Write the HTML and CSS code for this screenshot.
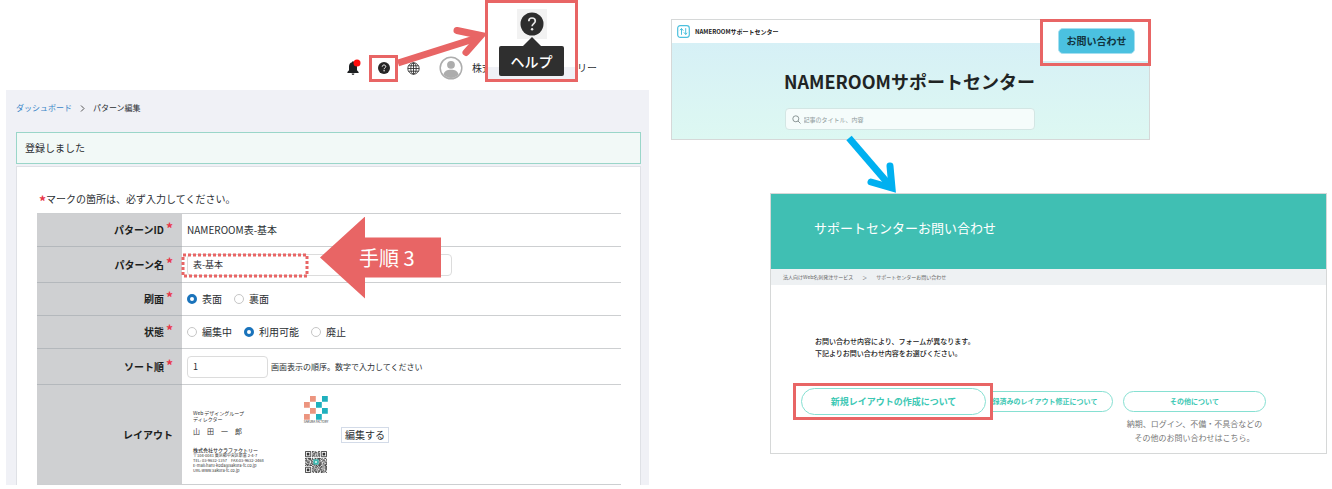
FILE: index.html
```html
<!DOCTYPE html>
<html lang="ja">
  <head>
    <meta charset="UTF-8" />
    <meta name="viewport" content="width=device-width, initial-scale=1.0" />
    <title>NAMEROOM パターン編集</title>
    <link rel="stylesheet" href="styles.css">
  </head>
  <body>
    <main class="guide">
      <section class="admin">
        <header class="admin-header">
          <button class="icon-button bell" type="button" aria-label="お知らせ">
            <svg width="15" height="18" viewBox="0 0 15 18">
              <path d="M6 3.2a1 1 0 0 1 2 0c2 .5 3 2.2 3 4.3v3.8l1.6 1.7v.9H1.4V13L3 11.3V7.500c0-2.100 1-3.800 3-4.300z" fill="#1d1f21" />
              <path d="M5.600 14.600h2.800a1.400 1.400 0 0 1-2.800 0z" fill="#1d1f21" />
              <circle cx="11" cy="4" r="3.500" fill="#ff0c0c" />
            </svg>
          </button>
          <button class="icon-button help" type="button" aria-label="ヘルプ">
            <svg width="12" height="12" viewBox="0 0 24 24">
              <circle cx="12" cy="12" r="12" fill="#262626" />
              <path d="M8.500 9.300c0-2 1.500-3.300 3.500-3.300s3.500 1.300 3.500 3.100c0 2.600-3.300 2.700-3.300 5.400" fill="none" stroke="#fff" stroke-width="2" />
              <circle cx="12.200" cy="17.500" r="1.400" fill="#fff" />
            </svg>
          </button>
          <button class="icon-button globe" type="button" aria-label="言語">
            <svg width="13" height="13" viewBox="0 0 13 13" fill="none" stroke="#333" stroke-width="0.900">
              <circle cx="6.500" cy="6.500" r="5.700" />
              <ellipse cx="6.500" cy="6.500" rx="2.700" ry="5.700" />
              <path d="M6.500 .8v11.400M.8 6.500h11.400M1.500 3.800h10M1.500 9.200h10" />
            </svg>
          </button>
          <svg class="avatar" width="24" height="24" viewBox="0 0 24 24">
            <circle cx="12" cy="12" r="10.800" fill="#fff" stroke="#adadad" stroke-width="1.500" />
            <circle cx="12" cy="8.800" r="3.900" fill="#adadad" />
            <path d="M4.500 18.500c.8-3.400 3.500-4.700 7.500-4.700s6.700 1.300 7.500 4.700a10 10 0 0 1-15 0z" fill="#adadad" />
          </svg>
          <div class="company"><span>株式</span><span>リー</span></div>

          <div class="help-zoom">
            <span class="help-zoom-icon">
              <svg width="24" height="24" viewBox="0 0 24 24">
                <circle cx="12" cy="12" r="11.500" fill="#2d2d2d" />
                <path d="M8.800 9.300c0-2 1.300-3.300 3.200-3.300s3.300 1.200 3.300 3c0 2.500-3.200 2.700-3.200 5.300" fill="none" stroke="#e8e8e8" stroke-width="1.700" />
                <circle cx="12.100" cy="17.300" r="1.200" fill="#e8e8e8" />
              </svg>
            </span>
            <span class="tooltip">ヘルプ</span>
          </div>
          <svg class="help-arrow" width="100" height="50" viewBox="0 0 100 50" fill="none" stroke="#e86565" stroke-width="7">
            <path d="M7 43L86 18" />
            <path d="M66 10.500L90 15.500L75 32.500" stroke-linecap="round" />
          </svg>
        </header>

        <div class="admin-body">
          <nav class="crumbs">
            <a href="#">ダッシュボード</a>
            <svg width="5" height="7" viewBox="0 0 5 7" fill="none" stroke="#555"><path d="M1 .5l3 3-3 3" /></svg>
            <span>パターン編集</span>
          </nav>
          <p class="notice">登録しました</p>

          <form class="panel">
            <p class="required-note"><span class="req">*</span>マークの箇所は、必ず入力してください。</p>
            <table class="pattern">
              <tr class="row-id">
                <th scope="row">パターンID<span class="req">*</span></th>
                <td>NAMEROOM表-基本</td>
              </tr>
              <tr class="row-name">
                <th scope="row"><label for="pattern-name">パターン名</label><span class="req">*</span></th>
                <td>
                  <div class="name-field">
                    <input class="text-input" id="pattern-name" type="text" value="表-基本" />
                    <svg class="dotted" width="128" height="25"><rect x="2" y="2" width="124" height="21" fill="none" stroke="#e86565" stroke-width="3" stroke-dasharray="3 2" /></svg>
                    <div class="step">手順 3</div>
                  </div>
                </td>
              </tr>
              <tr>
                <th scope="row">刷面<span class="req">*</span></th>
                <td>
                  <div class="radios">
                    <label><input type="radio" name="side" checked />表面</label>
                    <label><input type="radio" name="side" />裏面</label>
                  </div>
                </td>
              </tr>
              <tr>
                <th scope="row">状態<span class="req">*</span></th>
                <td>
                  <div class="radios">
                    <label><input type="radio" name="state" />編集中</label>
                    <label><input type="radio" name="state" checked />利用可能</label>
                    <label><input type="radio" name="state" />廃止</label>
                  </div>
                </td>
              </tr>
              <tr class="row-sort">
                <th scope="row"><label for="sort-order">ソート順</label><span class="req">*</span></th>
                <td>
                  <div class="sort-field">
                    <input class="text-input" id="sort-order" type="text" value="1" />
                    <span>画面表示の順序。数字で入力してください</span>
                  </div>
                </td>
              </tr>
              <tr class="row-layout">
                <th scope="row">レイアウト</th>
                <td>
                  <div class="layout-field">
                    <div class="meishi">
                      <div class="meishi-text">
                        <p class="meishi-role">Web デザイングループ<br />ディレクター</p>
                        <p class="meishi-name">山　田　一　郎</p>
                        <p class="meishi-company">株式会社サクラファクトリー</p>
                        <p class="meishi-address">〒104-0041 東京都中央区新富 2-4-7<br />TEL: 03-9632-1357　FAX:03-9632-2468<br />E-mail:haru-koda@sakura-fc.co.jp<br />URL:www.sakura-fc.co.jp</p>
                      </div>
                      <div class="meishi-marks">
                        <div class="meishi-logo">
                          <svg width="24" height="24" viewBox="0 0 24 24">
                            <path d="M6 0h5.800v5.800H6zM0 6h5.800v5.800H0zM6 12h5.800v5.800H6zM0 18h5.800v5.800H0z" fill="#ec957f" />
                            <path d="M18 0h5.800v5.800H18zM12 6h5.800v5.800H12zM18 12h5.800v5.800H18zM12 18h5.800v5.800H12z" fill="#1fb0bd" />
                          </svg>
                          <small>SAKURA FACTORY</small>
                        </div>
                        <svg width="22" height="22" viewBox="0 0 25 25">
                          <g fill="none" stroke="#333" stroke-width="1">
                            <path d="M.5 .5h6v6h-6zM18.500 .5h6v6h-6zM.5 18.500h6v6h-6z" />
                            <path d="M8 .5h9" stroke-dasharray="2 1 1 3" />
                            <path d="M8 1.500h9" stroke-dasharray="1 2 3 1" />
                            <path d="M9 2.500h8" stroke-dasharray="3 1 1 1" />
                            <path d="M8 3.500h9" stroke-dasharray="1 1 2 1" />
                            <path d="M9 4.500h8" stroke-dasharray="2 2 1 1" />
                            <path d="M8 5.500h9" stroke-dasharray="3 1 2 1" />
                            <path d="M8 6.500h9" stroke-dasharray="1 1" />
                            <path d="M0 8.500h25" stroke-dasharray="2 1 4 1 1 2" />
                            <path d="M1 9.500h24" stroke-dasharray="1 2 3 1 2 1" />
                            <path d="M0 10.500h25" stroke-dasharray="3 1 1 1 2 2" />
                            <path d="M1 11.500h24" stroke-dasharray="2 1 1 2" />
                            <path d="M0 12.500h25" stroke-dasharray="1 1 4 1 2 1" />
                            <path d="M2 13.500h23" stroke-dasharray="3 2 1 1" />
                            <path d="M0 14.500h25" stroke-dasharray="2 2 1 1 3 1" />
                            <path d="M1 15.500h24" stroke-dasharray="4 1 1 1" />
                            <path d="M0 16.500h25" stroke-dasharray="1 1 2 1 3 2" />
                            <path d="M8 17.500h17" stroke-dasharray="2 1 1 1" />
                            <path d="M9 18.500h16" stroke-dasharray="1 1 3 1" />
                            <path d="M8 19.500h17" stroke-dasharray="3 2 1 1" />
                            <path d="M8 20.500h17" stroke-dasharray="1 2 2 1" />
                            <path d="M9 21.500h16" stroke-dasharray="4 1 1 1" />
                            <path d="M8 22.500h17" stroke-dasharray="1 1 2 1" />
                            <path d="M8 23.500h17" stroke-dasharray="2 1 3 1" />
                            <path d="M9 24.500h16" stroke-dasharray="1 2 2 1" />
                          </g>
                          <path d="M2 2h3v3H2zM20 2h3v3h-3zM2 20h3v3H2z" fill="#333" />
                          <path d="M9.500 9.500h6v6h-6z" fill="#3db8b0" />
                          <path d="M11.500 11.500h2v2h-2z" fill="#c9efec" />
                        </svg>
                      </div>
                    </div>
                    <button class="edit" type="button">編集する</button>
                  </div>
                </td>
              </tr>
            </table>
          </form>
        </div>
      </section>

      <section class="support">
        <div class="center-card">
          <header class="center-bar">
            <svg width="13" height="13" viewBox="0 0 13 13" fill="none" stroke="#4cc0de">
              <rect x=".7" y=".7" width="11.600" height="11.600" rx="2.500" stroke-width="1.200" />
              <path d="M4.500 9.800V3.500L3 5.200M4.500 3.500l1.800 2.200M8.700 3.200v6.300l-1.900-2.200M8.700 9.500l1.500-1.700" stroke-width="1" />
            </svg>
            <span>NAMEROOMサポートセンター</span>
          </header>
          <div class="center-hero">
            <h1>NAMEROOMサポートセンター</h1>
            <label class="search">
              <svg width="9" height="9" viewBox="0 0 9 9" fill="none" stroke="#8b9696">
                <circle cx="3.800" cy="3.800" r="3" />
                <path d="M6 6l2.500 2.500" />
              </svg>
              <input type="search" aria-label="記事を検索" placeholder="記事のタイトル、内容" />
            </label>
          </div>
          <div class="inquiry-zoom">
            <button type="button">お問い合わせ</button>
          </div>
        </div>

        <div class="contact-card">
          <h2>サポートセンターお問い合わせ</h2>
          <nav class="contact-crumbs">
            <a href="#">法人向けWeb名刺発注サービス</a>
            <span>＞</span>
            <span>サポートセンターお問い合わせ</span>
          </nav>
          <div class="contact-body">
            <p class="lead">お問い合わせ内容により、フォームが異なります。<br />下記よりお問い合わせ内容をお選びください。</p>
            <div class="choices">
              <div class="choice">
                <div class="choice-zoom"><a class="pill pill-large" href="#">新規レイアウトの作成について</a></div>
              </div>
              <div class="choice">
                <a class="pill" href="#">登録済みのレイアウト修正について</a>
              </div>
              <div class="choice">
                <a class="pill" href="#">その他について</a>
                <p>納期、ログイン、不備・不具合などの<br />その他のお問い合わせはこちら。</p>
              </div>
            </div>
          </div>
          <svg class="contact-arrow" width="60" height="66" viewBox="0 0 60 66" fill="none" stroke="#00b0f0" stroke-width="7">
            <path d="M9 7L52 57" />
            <path d="M31 51L52 57L50 35" stroke-linecap="round" />
          </svg>
        </div>
      </section>
    </main>
  </body>
</html>
```
FILE: styles.css
```css
* {
  padding: 0;
  margin: 0;
  box-sizing: border-box;
}
body {
  background-color: #ffffff;
  font-family: "Noto Sans CJK JP", sans-serif;
  font-size: 10px;
  line-height: 12px;
  color: #2b2f33;
}
button,
input {
  font-family: inherit;
  color: inherit;
}
a {
  text-decoration: none;
}
svg {
  display: block;
  flex: none;
}
.guide {
  display: grid;
  grid-template-columns: 643fr 656fr;
  gap: 22px;
  align-items: start;
  padding: 0 5px 0 6px;
}

/* admin screen */
.admin-header {
  position: relative;
  display: flex;
  justify-content: flex-end;
  align-items: center;
  height: 90px;
  padding: 46px 52px 0 0;
}
.icon-button {
  display: flex;
  justify-content: center;
  align-items: center;
  border: 0;
  background: none;
  cursor: pointer;
}
.help {
  width: 29px;
  height: 27px;
  margin: 0 9px 0 8px;
  border: 3px solid #e86565;
}
.avatar {
  margin: 0 9px 0 19px;
}
.company {
  display: flex;
  justify-content: space-between;
  width: 125px;
}
.help-zoom {
  position: absolute;
  top: 0;
  right: 71px;
  display: flex;
  flex-direction: column;
  align-items: center;
  width: 93px;
  height: 82px;
  padding-top: 6px;
  border: 3px solid #e86565;
  background: linear-gradient(#ffffff 64px, #f0f1f6 64px);
}
.help-zoom-icon {
  padding: 3px;
  background-color: #f2f2f2;
}
.tooltip {
  position: relative;
  width: 65px;
  margin-top: 7px;
  border-radius: 2px;
  background-color: #2f2f2f;
  color: #ffffff;
  font-size: 14px;
  font-weight: 500;
  line-height: 30px;
  text-align: center;
}
.tooltip::before {
  content: "";
  position: absolute;
  left: 50%;
  bottom: 100%;
  margin-left: -9px;
  border: 9px solid transparent;
  border-top: 0;
  border-bottom-color: #2f2f2f;
}
.help-arrow {
  position: absolute;
  top: 20px;
  right: 158px;
}
.admin-body {
  padding: 12px 8px 0 10px;
  background-color: #f0f1f6;
}
.crumbs {
  display: flex;
  align-items: center;
  gap: 8px;
  margin-bottom: 18px;
  font-size: 8px;
}
.crumbs a {
  color: #3a86c8;
}
.notice {
  padding: 9px 8px;
  border: 1px solid #9ad6c9;
  background-color: #f2f9f7;
}
.panel {
  margin-top: 2px;
  padding: 26px 19px 0 20px;
  border: 1px solid #dfe1e6;
  border-bottom: 0;
  background-color: #ffffff;
}
.required-note {
  margin-bottom: 8px;
  padding-left: 2px;
}
.req {
  color: #e8364a;
  font-size: 14px;
  font-weight: 700;
}
.required-note .req {
  vertical-align: -4px;
  line-height: 8px;
}
.pattern {
  width: 100%;
  border-collapse: collapse;
}
.pattern tr {
  height: 33px;
  border-top: 1px solid #cdcfd1;
}
.pattern .row-name,
.pattern .row-sort {
  height: 36px;
}
.pattern .row-layout {
  height: 100px;
  border-bottom: 1px solid #cdcfd1;
}
.pattern th {
  width: 145px;
  padding-right: 9px;
  background-color: #cfd0d2;
  color: #1c1e20;
  font-weight: 700;
  text-align: right;
}
.pattern tr + tr th {
  border-top: 1px solid #b4b8bc;
}
.pattern th .req {
  margin-left: 2px;
  line-height: 8px;
}
.pattern td {
  padding-left: 5px;
}
.text-input {
  display: block;
  height: 22px;
  padding: 0 5px;
  border: 1px solid #dcdcdc;
  border-radius: 4px;
  background-color: #ffffff;
  font-size: 9px;
}
.name-field {
  position: relative;
}
.name-field .text-input {
  width: 265px;
}
.dotted {
  position: absolute;
  top: -1px;
  left: -6px;
}
.step {
  position: absolute;
  top: -37px;
  left: 133px;
  width: 121px;
  padding-left: 39px;
  background-color: #e86565;
  clip-path: polygon(0 50%, 45px 0, 45px 21px, 100% 21px, 100% 61px, 45px 61px, 45px 100%);
  color: #ffffff;
  font-size: 20px;
  line-height: 82px;
}
.radios {
  display: flex;
  gap: 12px;
}
.radios label {
  display: flex;
  align-items: center;
  gap: 5px;
}
.radios input {
  appearance: none;
  width: 10px;
  height: 10px;
  border: 1px solid #c6c6c6;
  border-radius: 50%;
  background-color: #ffffff;
}
.radios input:checked {
  border: 3px solid #1a73bb;
}
.sort-field {
  display: flex;
  align-items: center;
  gap: 3px;
  font-size: 8px;
}
.sort-field .text-input {
  width: 81px;
}
.layout-field {
  display: flex;
  align-items: center;
  gap: 5px;
}
.meishi {
  display: flex;
  justify-content: space-between;
  width: 149px;
  padding: 0 8px 0 6px;
  white-space: nowrap;
}
.meishi-text {
  width: 100px;
  padding-top: 14px;
  color: #333333;
}
.meishi-role {
  font-size: 5px;
  line-height: 6px;
}
.meishi-name {
  margin: 4px 0 11px;
  font-size: 7px;
  line-height: 10px;
}
.meishi-company {
  font-size: 5px;
  font-weight: 500;
  line-height: 6px;
}
.meishi-address {
  font-size: 4px;
  line-height: 5px;
}
.meishi-marks {
  display: flex;
  flex-direction: column;
  justify-content: space-between;
  align-items: center;
  width: 24px;
}
.meishi-logo small {
  display: block;
  font-size: 3px;
  line-height: 4px;
  text-align: center;
}
.edit {
  height: 16px;
  padding: 0 3px;
  border: 1px solid #d3dbe8;
  background-color: #ffffff;
  font-size: 10px;
  line-height: 12px;
}

/* support center */
.support {
  padding-top: 19px;
}
.center-card {
  position: relative;
  margin-right: 177px;
  border: 1px solid #d6d8d8;
}
.center-bar {
  display: flex;
  align-items: center;
  gap: 5px;
  height: 23px;
  padding-left: 5px;
  color: #222222;
  font-size: 6px;
  font-weight: 700;
}
.center-hero {
  display: flex;
  flex-direction: column;
  align-items: center;
  padding: 24px 2px 9px 0;
  background: linear-gradient(#d6f0f6, #ddf8f2);
}
.center-hero h1 {
  color: #1f2424;
  font-size: 18px;
  line-height: 28px;
}
.search {
  display: flex;
  align-items: center;
  gap: 3px;
  width: 250px;
  height: 22px;
  margin-top: 13px;
  padding: 0 6px;
  border: 1px solid #d3e6e4;
  border-radius: 4px;
  background-color: #f5fcfb;
}
.search input {
  flex: 1;
  min-width: 0;
  border: 0;
  outline: 0;
  background: none;
  font-size: 6px;
}
.search input::placeholder {
  color: #8f9b9b;
}
.inquiry-zoom {
  position: absolute;
  top: -1px;
  right: -2px;
  padding: 6px 13px 9px 15px;
  border: 3px solid #e86565;
  background: linear-gradient(#ffffff 39px, #d6f0f6 39px);
}
.inquiry-zoom button {
  display: block;
  width: 77px;
  height: 26px;
  border: 1px solid #a5dff0;
  border-radius: 5px;
  background-color: #4bc1e0;
  color: #12343d;
  font-size: 10px;
  font-weight: 700;
  line-height: 22px;
}
.contact-card {
  position: relative;
  margin: 53px 0 0 99px;
  border: 1px solid #d6d8d8;
}
.contact-card h2 {
  padding: 0 0 7px 43px;
  background-color: #40bfb3;
  color: #ffffff;
  font-size: 13px;
  font-weight: 400;
  line-height: 68px;
}
.contact-crumbs {
  display: flex;
  gap: 9px;
  padding-left: 12px;
  background-color: #eef1f3;
  color: #666666;
  font-size: 5px;
  line-height: 16px;
}
.contact-crumbs a {
  color: inherit;
}
.contact-body {
  padding: 50px 60px 8px 44px;
}
.lead {
  margin: 0 0 32px;
  color: #222222;
  font-size: 7px;
  font-weight: 500;
}
.choices {
  display: grid;
  grid-template-columns: repeat(3, 1fr);
  gap: 10px;
  padding-left: 2px;
}
.choice {
  position: relative;
  color: #777777;
  font-size: 8px;
  line-height: 14px;
  text-align: center;
  white-space: nowrap;
}
.choice p {
  margin-top: 5px;
}
.pill {
  display: block;
  border: 1px solid #86e0d2;
  border-radius: 14px;
  background-color: #ffffff;
  color: #3cc8b4;
  font-size: 7px;
  font-weight: 700;
  line-height: 19px;
}
.pill-large {
  font-size: 9px;
  line-height: 25px;
}
.choice-zoom {
  position: absolute;
  z-index: 1;
  top: -8px;
  right: -33px;
  width: 200px;
  padding: 2px 4px 2px 5px;
  border: 3px solid #e86565;
  background-color: #ffffff;
}
.contact-arrow {
  position: absolute;
  top: -63px;
  left: 69px;
}
```
